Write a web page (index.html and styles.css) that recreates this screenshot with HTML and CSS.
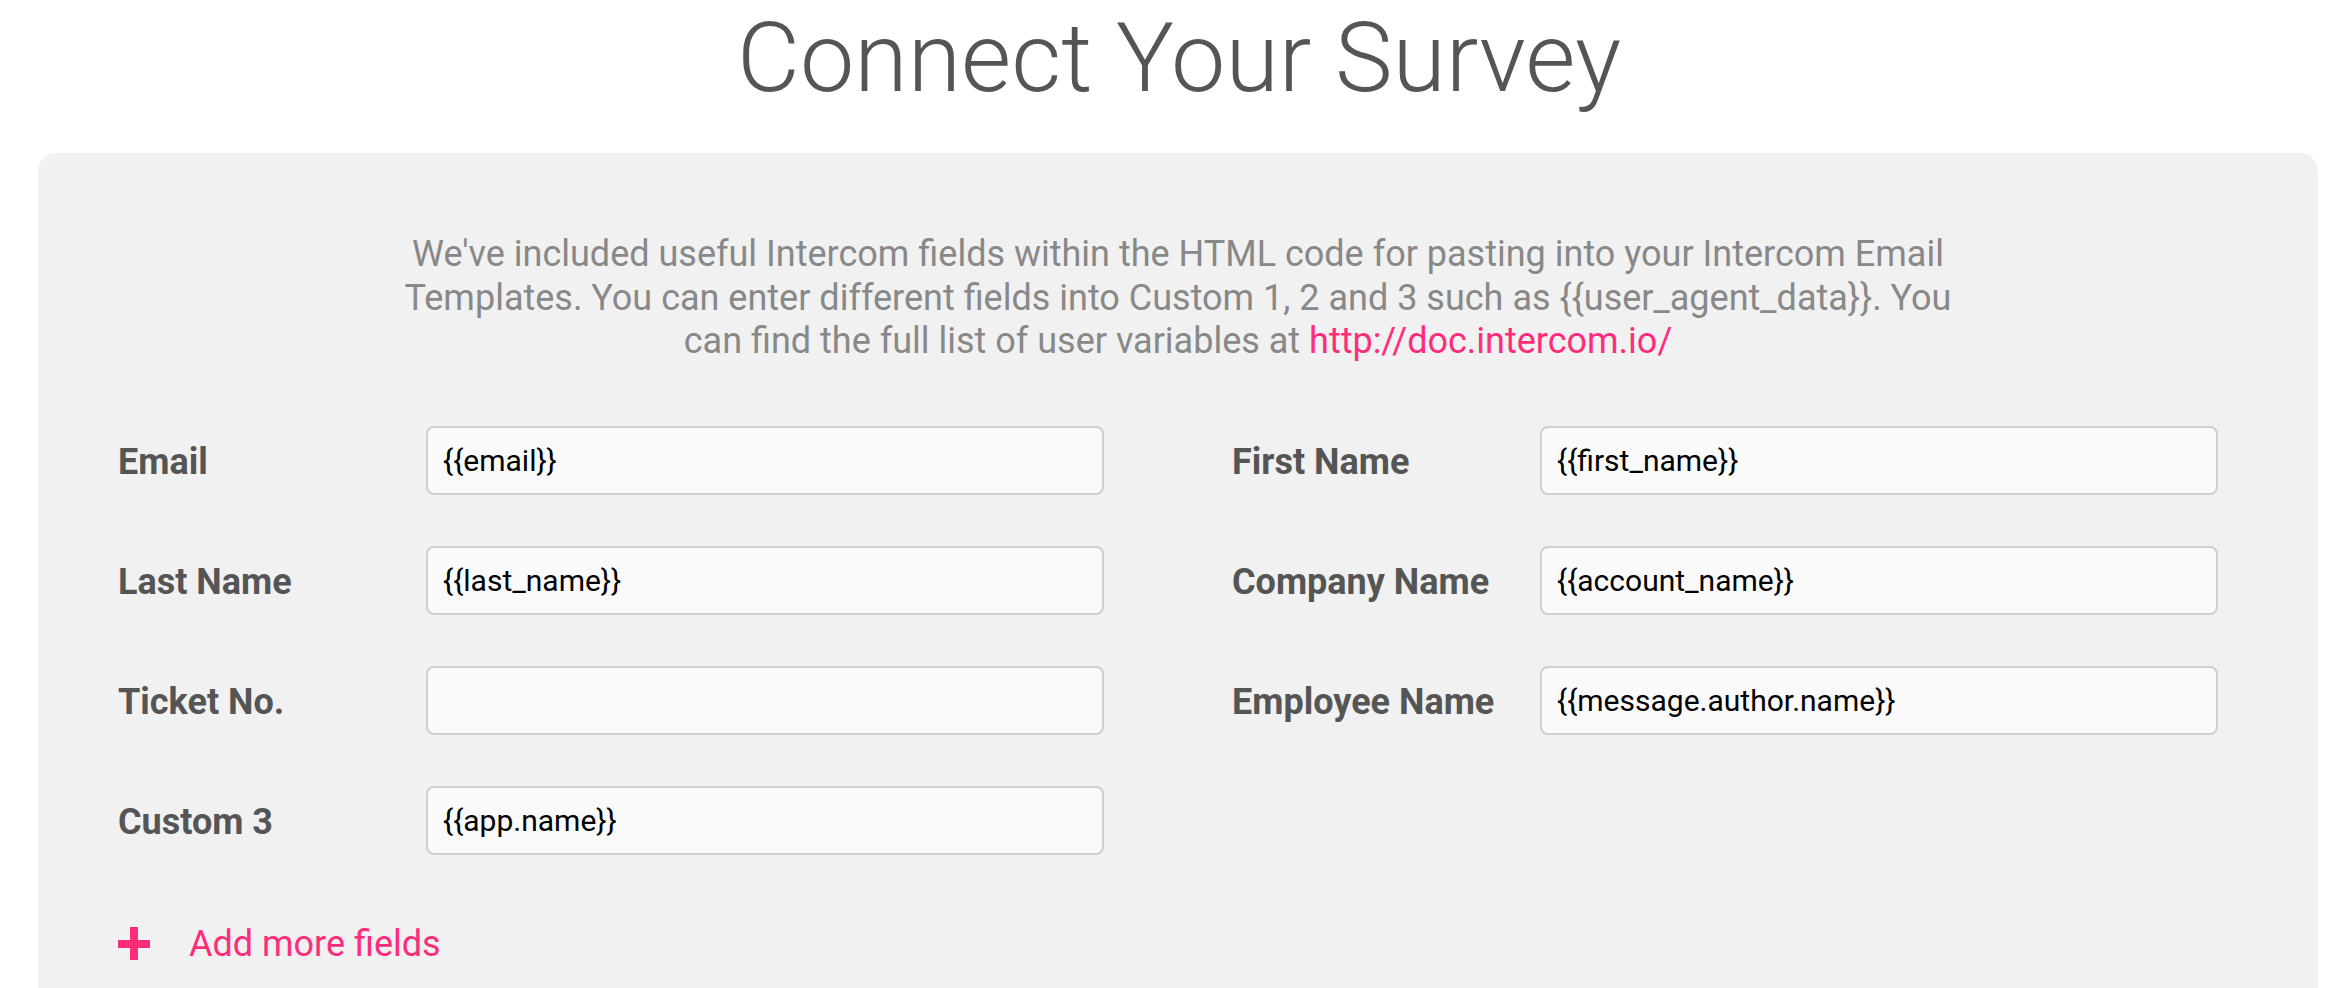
FILE: index.html
```html
<!DOCTYPE html>
<html lang="en">
<head>
  <meta charset="UTF-8">
  <title>Connect Your Survey</title>
  <link rel="stylesheet" href="styles.css">
</head>
<body>

  <h1 class="page-title">Connect Your Survey</h1>

  <div class="card">
    <p class="intro">
      We've included useful Intercom fields within the HTML code for pasting into your Intercom Email
      Templates. You can enter different fields into Custom 1, 2 and 3 such as {{user_agent_data}}. You
      can find the full list of user variables at <a href="#">http://doc.intercom.io/</a>
    </p>

    <div class="fields">
      <div class="field">
        <label for="f-email">Email</label>
        <input type="text" id="f-email" value="{{email}}">
      </div>
      <div class="field">
        <label for="f-first">First Name</label>
        <input type="text" id="f-first" value="{{first_name}}">
      </div>
      <div class="field">
        <label for="f-last">Last Name</label>
        <input type="text" id="f-last" value="{{last_name}}">
      </div>
      <div class="field">
        <label for="f-company">Company Name</label>
        <input type="text" id="f-company" value="{{account_name}}">
      </div>
      <div class="field">
        <label for="f-ticket">Ticket No.</label>
        <input type="text" id="f-ticket" value="">
      </div>
      <div class="field">
        <label for="f-employee">Employee Name</label>
        <input type="text" id="f-employee" value="{{message.author.name}}">
      </div>
      <div class="field">
        <label for="f-custom3">Custom 3</label>
        <input type="text" id="f-custom3" value="{{app.name}}">
      </div>
    </div>

    <div class="add-more">
      <svg class="plus" width="32" height="33" viewBox="0 0 32 33">
        <rect x="12" y="0" width="8" height="33" fill="#ff2d79"/>
        <rect x="0" y="13" width="32" height="8" fill="#ff2d79"/>
      </svg>
      <span>Add more fields</span>
    </div>
  </div>

</body>
</html>
```
FILE: styles.css
```css
body {
  margin: 0;
  font-family: Roboto, "Liberation Sans", Arial, sans-serif;
  background: #fff;
}
.page-title {
  margin: 0 0 40px;
  font-size: 97px;
  font-weight: 300;
  line-height: 114px;
  color: #555;
  text-align: center;
  padding: 1px 0 0 6px;
  height: 113px;
  box-sizing: border-box;
}
.card {
  margin: 0 34px 0 38px;
  padding: 80px 0 120px 80px;
  background: #f1f1f1;
  border-radius: 18px 18px 0 0;
  min-height: 700px;
}
.intro {
  max-width: 1570px;
  margin: 0 auto 62px;
  padding-right: 80px;
  font-size: 36px;
  line-height: 43.5px;
  color: #888;
  text-align: center;
}
.intro a {
  color: #ff2d79;
  text-decoration: none;
}
.fields {
  display: grid;
  grid-template-columns: 986px 986px;
  column-gap: 128px;
  row-gap: 51px;
}
.field {
  display: flex;
  align-items: center;
}
.field label {
  flex: none;
  width: 308px;
  padding-top: 4px;
  font-size: 36px;
  font-weight: 700;
  color: #555;
}
.field input {
  flex: none;
  box-sizing: border-box;
  width: 678px;
  height: 69px;
  padding: 0 15px;
  border: 2px solid #cfcfcf;
  border-radius: 8px;
  background: #fafafa;
  font-family: Roboto, "Liberation Sans", Arial, sans-serif;
  font-size: 30px;
  color: #000;
  outline: none;
}
.add-more {
  display: flex;
  align-items: center;
  gap: 39px;
  margin-top: 68px;
  color: #ff2d79;
  font-size: 36px;
}
.plus {
  display: block;
}
```
